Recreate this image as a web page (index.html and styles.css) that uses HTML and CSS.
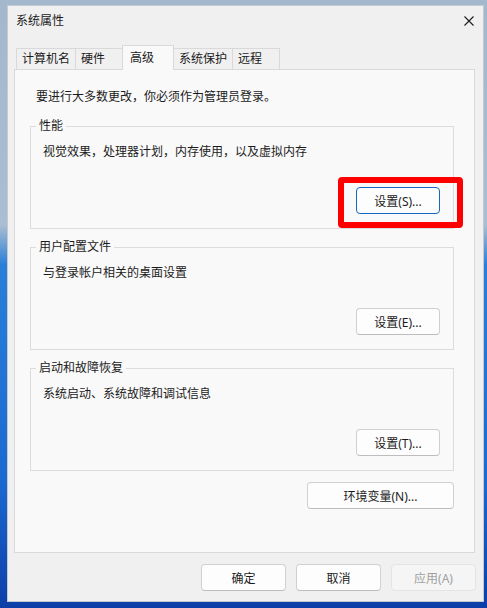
FILE: index.html
```html
<!DOCTYPE html>
<html lang="zh-CN">
<head>
    <meta charset="UTF-8">
    <title>系统属性</title>
    <link rel="stylesheet" href="styles.css">
</head>
<body>
    <div class="window">
        <!-- Title bar -->
        <div class="titlebar">
            <span class="title">系统属性</span>
            <span class="close">
                <svg width="10" height="10" viewBox="0 0 10 10">
                    <path d="M0.5 0.5L9.5 9.5M9.5 0.5L0.5 9.5" stroke="#1b1b1b" stroke-width="1.1" fill="none"/>
                </svg>
            </span>
        </div>

        <!-- Tabs -->
        <div class="tabs">
            <div class="tab">计算机名</div>
            <div class="tab">硬件</div>
            <div class="tab active">高级</div>
            <div class="tab">系统保护</div>
            <div class="tab">远程</div>
        </div>

        <!-- Advanced page -->
        <div class="panel">
            <p class="notice">要进行大多数更改，你必须作为管理员登录。</p>

            <fieldset class="group">
                <legend>性能</legend>
                <p class="desc">视觉效果，处理器计划，内存使用，以及虚拟内存</p>
                <div class="actions">
                    <button class="btn default">设置(S)...</button>
                    <span class="mark"></span>
                </div>
            </fieldset>

            <fieldset class="group">
                <legend>用户配置文件</legend>
                <p class="desc">与登录帐户相关的桌面设置</p>
                <div class="actions">
                    <button class="btn">设置(E)...</button>
                </div>
            </fieldset>

            <fieldset class="group">
                <legend>启动和故障恢复</legend>
                <p class="desc">系统启动、系统故障和调试信息</p>
                <div class="actions">
                    <button class="btn">设置(T)...</button>
                </div>
            </fieldset>

            <div class="env-row">
                <button class="btn wide">环境变量(N)...</button>
            </div>
        </div>

        <!-- Dialog buttons -->
        <div class="footer">
            <button class="btn">确定</button>
            <button class="btn">取消</button>
            <button class="btn" disabled>应用(A)</button>
        </div>
    </div>
</body>
</html>
```

FILE: styles.css
```css
/* Desktop + dialog */
html, body {
    margin: 0;
    padding: 0;
    height: 608px;
    overflow: hidden;
}

body {
    font-family: "Noto Sans", "Noto Sans CJK SC", sans-serif;
    font-size: 12px;
    color: #1b1b1b;
    background: linear-gradient(180deg, #a3b8cd 0px, #aabed2 225px, #2a7fd8 265px, #1a6ad2 480px, #0d3ea8 608px);
}

.window {
    margin: 5px 0 0 7px;
    width: 477px;
    height: 597px;
    box-sizing: border-box;
    border: 1px solid #c5cad0;
    background-color: #f0f0f0;
}

.titlebar {
    height: 29px;
    display: flex;
    align-items: center;
    justify-content: space-between;
    padding: 0 9px 0 8px;
}

.title {
    line-height: 16px;
}

.close {
    display: flex;
}

/* Tabs */
.tabs {
    display: flex;
    align-items: flex-end;
    height: 24px;
    margin: 10px 0 0 8px;
}

.tab {
    height: 21px;
    min-width: 48px;
    box-sizing: border-box;
    padding: 0 5px;
    border: 1px solid #d9d9d9;
    border-bottom: none;
    margin-left: -1px;
    line-height: 20px;
    background-color: #f0f0f0;
    white-space: nowrap;
}

.tab:first-child {
    margin-left: 0;
}

.tab.active {
    height: 25px;
    min-width: 52px;
    margin-bottom: -1px;
    padding-left: 7px;
    line-height: 23px;
    background-color: #f9f9f9;
    position: relative;
    z-index: 1;
}

/* Page */
.panel {
    height: 484px;
    box-sizing: border-box;
    margin: 0 8px 0 6px;
    padding: 19px 20px 0 15px;
    border: 1px solid #d9d9d9;
    background-color: #f9f9f9;
}

.notice {
    margin: 0 0 14px 6px;
    line-height: 16px;
}

.group {
    margin: 0 0 11px 0;
    padding: 11px 13px 14px 12px;
    border: 1px solid #dcdcdc;
    min-width: 0;
}

.group legend {
    margin-left: -7px;
    padding: 0 3px;
    line-height: 14px;
}

.desc {
    margin: 0;
    line-height: 16px;
}

.actions {
    display: flex;
    justify-content: flex-end;
    margin-top: 27px;
    position: relative;
}

/* Red highlight drawn over the performance button */
.mark {
    position: absolute;
    left: 295px;
    top: -10px;
    width: 125px;
    height: 51px;
    box-sizing: border-box;
    border: 6px solid #fe0000;
    border-radius: 4px;
    pointer-events: none;
}

.env-row {
    display: flex;
    justify-content: flex-end;
    margin-top: 7px;
}

/* Buttons */
.btn {
    width: 84px;
    height: 27px;
    padding: 0;
    font-family: inherit;
    font-size: 12px;
    color: #1b1b1b;
    background-color: #fdfdfd;
    border: 1px solid #d0d0d0;
    border-bottom-color: #bdbdbd;
    border-radius: 4px;
}

.btn.default {
    border-color: #1467c2;
}

.btn.wide {
    width: 147px;
}

.btn:disabled {
    color: #a0a0a0;
    background-color: #f5f5f5;
    border-color: #e4e4e4;
}

.footer {
    display: flex;
    justify-content: flex-end;
    gap: 10px;
    margin-top: 11px;
    padding-right: 7px;
}

.footer .btn {
    width: 85px;
}
```
